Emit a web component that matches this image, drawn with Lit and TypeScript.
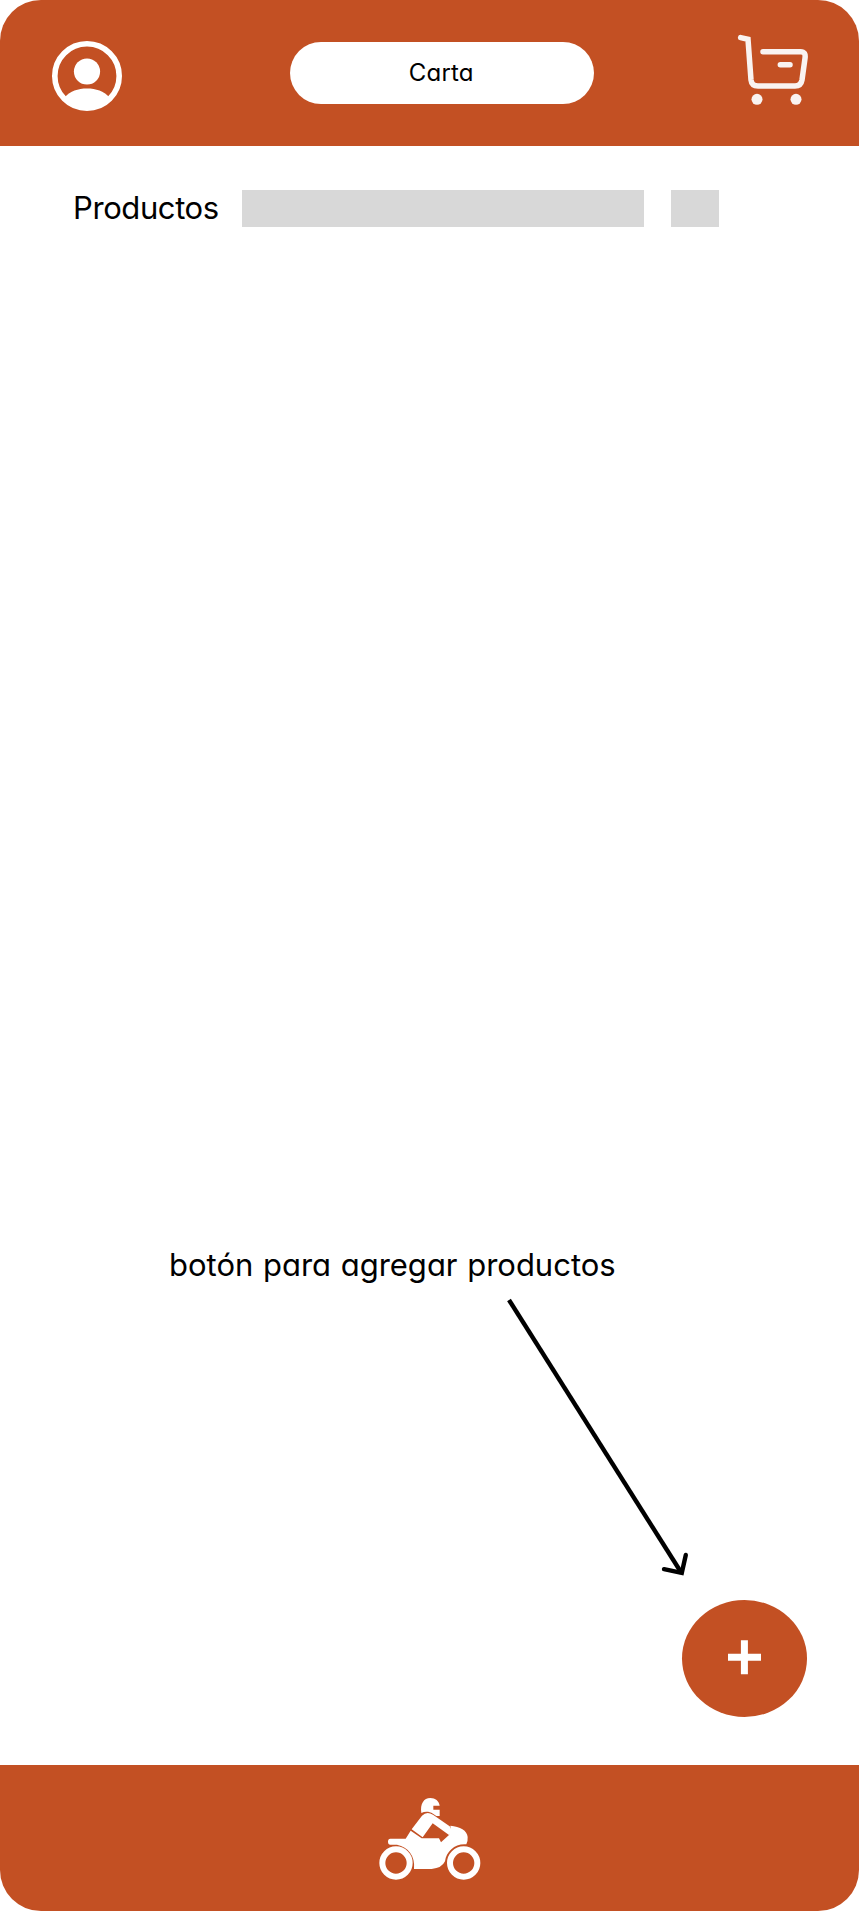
import { LitElement, html, css } from "lit";
import { customElement } from "lit/decorators.js";

@customElement("app-root")
export class AppRoot extends LitElement {
  static styles = css`
    :host {
      display: block;
      font-family: Inter, "Open Sans", sans-serif;
      font-feature-settings: "cv11" 1;
      color: #000;
      background: #fff;
    }
    svg { display: block; overflow: visible; }
    .screen {
      display: flex;
      flex-direction: column;
      height: 1911px;
      border-radius: 41px;
      overflow: hidden;
    }
    header {
      display: flex;
      justify-content: space-between;
      align-items: flex-start;
      box-sizing: border-box;
      height: 145.7px;
      padding: 35.4px 51px 0 52px;
      background: #c35023;
      flex: none;
    }
    .user { margin-top: 5.8px; }
    .title {
      width: 304.3px;
      height: 62.6px;
      margin: 6.3px 0 0 23.6px;
      border-radius: 32px;
      background: #fff;
      text-align: center;
      font-size: 24px;
      line-height: 62.6px;
      letter-spacing: 0.2px;
      text-indent: -1px;
    }
    main { flex: 1; display: flex; flex-direction: column; }
    .row { display: flex; align-items: center; height: 38px; margin: 43.6px 0 0 73px; }
    .label { width: 169px; font-size: 31px; white-space: nowrap; line-height: 38px; letter-spacing: -0.4px; }
    .field { width: 402px; height: 37.3px; background: #d8d8d8; }
    .small { width: 48px; margin-left: 27px; }
    .spacer { flex: 1; }
    .hint {
      margin: 0 0 0 169px;
      font-size: 31px;
      line-height: 40px;
      letter-spacing: 0;
      word-spacing: 0.9px;
      white-space: nowrap;
    }
    .arrow { margin: 11.4px 0 0 500px; }
    .add { margin: 24px 0 47.6px 682px; width: 125px; height: 117px; padding: 0; border: 0; background: none; }
    footer { flex: none; height: 146px; background: #c35023; display: flex; padding: 15px 0 0 360px; box-sizing: border-box; }
  `;

  render() {
    return html`
      <div class="screen">
        <header>
          <svg class="user" width="70" height="70" viewBox="0 0 70 70">
            <circle cx="35" cy="35" r="32.2" fill="none" stroke="#fff" stroke-width="5.6" />
            <circle cx="35" cy="30.5" r="13.1" fill="#fff" />
            <path d="M13 56C18 50 26 47.4 35 47.4S52 50 57 56L54 62Q35 76 16 62Z" fill="#fff" />
          </svg>
          <div class="title">Carta</div>
          <svg width="70" height="71" viewBox="114 105 210 213" fill="none" stroke="#f9f3f1" stroke-width="16.5" stroke-linecap="round">
            <path d="M122 113L144 118L153 240Q155 258 174 258H285Q303 258 306 240L315 175Q318 155 302 155H189M241 194H270" />
            <circle cx="171" cy="298" r="16.5" fill="#f9f3f1" stroke="none" />
            <circle cx="288" cy="298" r="16.5" fill="#f9f3f1" stroke="none" />
          </svg>
        </header>
        <main>
          <div class="row">
            <span class="label">Productos</span>
            <div class="field"></div>
            <div class="field small"></div>
          </div>
          <div class="spacer"></div>
          <div class="hint">botón para agregar productos</div>
          <svg class="arrow" width="200" height="280" viewBox="0 0 200 280" fill="none" stroke="#000" stroke-width="4.4">
            <path d="M9 4L181.5 277" />
            <path d="M164 273.2L181.8 276.8L185.8 259" stroke-linecap="round" />
          </svg>
          <button class="add" aria-label="+">
            <svg width="125" height="117" viewBox="0 0 125 117">
              <ellipse cx="62.5" cy="58.5" rx="62.5" ry="58.5" fill="#c35023" />
              <path d="M46 57.3H79M62.4 40.3V74.3" stroke="#fff" stroke-width="7" />
            </svg>
          </button>
        </main>
        <footer>
          <svg width="140" height="120" viewBox="0 0 420 360" fill="#fff">
            <circle cx="108" cy="249" r="41" fill="none" stroke="#fff" stroke-width="18" />
            <circle cx="311" cy="249" r="41" fill="none" stroke="#fff" stroke-width="18" />
            <path d="M184 99C180 72 191 54 211 54C226 54 237 63 239 77H220V89H239V108H229L219 101C207 94 195 94 184 99Z" />
            <path d="M155 148L186 107Q200 92 219 104L269 139L276 152L267 165L218 130L188 172Z" />
            <path d="M152 152L185 175H237L243 187L267 165L272 146L271 137C300 140 322 151 323 171Q324 182 319 193C286 190 259 213 255 244Q246 264 215 267H162C166 227 145 202 111 194H91Q84 194 84 185Q84 176 91 176H137Z" />
          </svg>
        </footer>
      </div>
    `;
  }
}
